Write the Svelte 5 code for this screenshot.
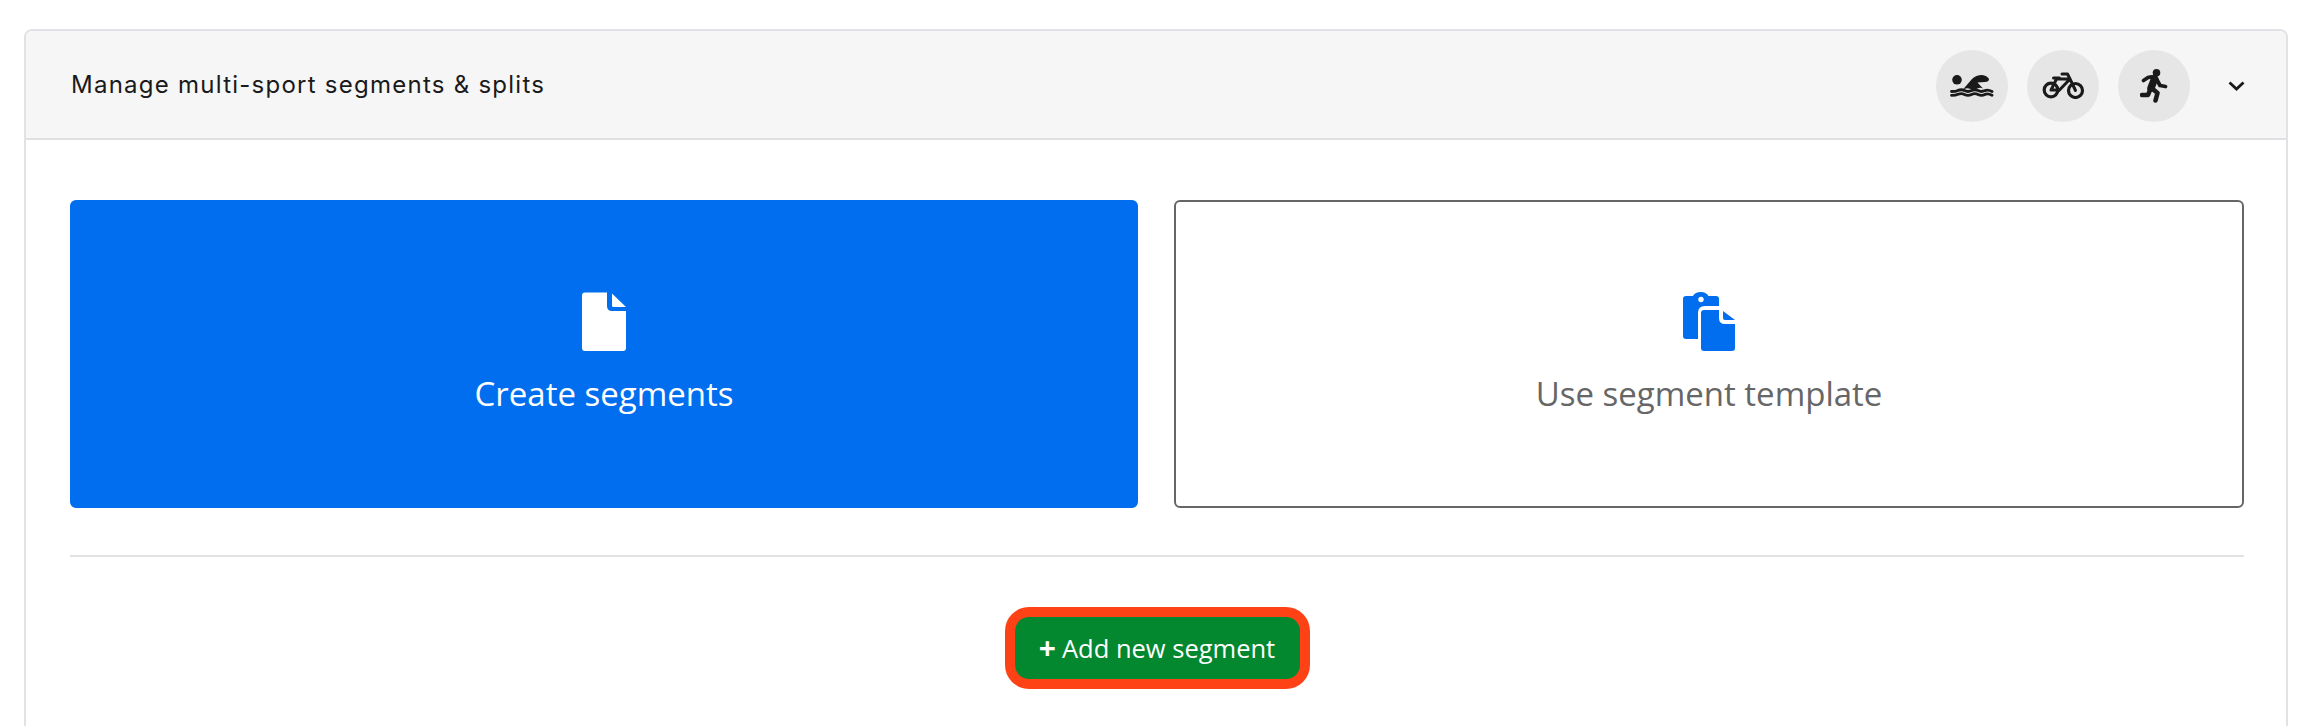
<script lang="ts">
  let sports = ['swim', 'bike', 'run'];
</script>

<div class="page">
  <section class="card">
    <header class="head">
      <h2>Manage multi-sport segments &amp; splits</h2>
      <div class="sports">
        {#each sports as s}
          <span class="sport">
            {#if s === 'swim'}
              <svg width="44" height="22" viewBox="0 0 44 22">
                <circle cx="7" cy="4.800" r="4.800" fill="#1a1a1a" />
                <path d="M12.500 15 L22 4 Q26 0 32 0 Q37 0.500 39 4 Q39 6.800 35 7 L27.500 7.600 L33 13.500 Q30 12 27 13.800 Q23.500 15.500 20 13.800 Q16 12 12.500 15Z" fill="#1a1a1a" />
                <path d="M1.500 16.500 Q6 16.500 8 15.400 Q11.500 14 14.500 15.600 Q18 17.400 21.500 15.600 Q25 14 28 15.600 Q31.500 17.400 35 15.600 Q38 14.400 42 16.500 M1.500 20.300 Q6 20.300 8 19.200 Q11.500 17.800 14.500 19.400 Q18 21.200 21.500 19.400 Q25 17.800 28 19.400 Q31.500 21.200 35 19.400 Q38 18.200 42 20.300" fill="none" stroke="#1a1a1a" stroke-width="2.800" stroke-linecap="round" />
              </svg>
            {:else if s === 'bike'}
              <svg width="43" height="27" viewBox="0 0 42 27">
                <circle cx="8.500" cy="18" r="6.800" fill="none" stroke="#1a1a1a" stroke-width="3.200" />
                <circle cx="33" cy="18.500" r="7" fill="none" stroke="#1a1a1a" stroke-width="3.200" />
                <path d="M8.500 18 L14 7 H27.500 L33 18.500 M16.500 18.500 L27.500 7 M8.500 18 H16.500 M11 6 H17 M19.500 2 H25 L27.500 7" fill="none" stroke="#1a1a1a" stroke-width="3" stroke-linecap="round" stroke-linejoin="round" />
              </svg>
            {:else}
              <svg width="28" height="34" viewBox="0 0 28 34">
                <circle cx="16.500" cy="3.800" r="3.800" fill="#1a1a1a" />
                <path d="M3.500 11.500 L8 8.500 Q13 7 16 9 L20 16.500 L25.500 17.500" fill="none" stroke="#1a1a1a" stroke-width="3.800" stroke-linecap="round" stroke-linejoin="round" />
                <path d="M14.500 10 L11 19" fill="none" stroke="#1a1a1a" stroke-width="7.500" stroke-linecap="round" />
                <path d="M11.500 19 L17.500 24 L15.500 31.500 M10 21 L8 26 H2" fill="none" stroke="#1a1a1a" stroke-width="4.600" stroke-linecap="round" stroke-linejoin="round" />
              </svg>
            {/if}
          </span>
        {/each}
        <button class="chev" aria-label="Collapse">
          <svg width="17" height="10" viewBox="0 0 17 10"><path d="M1.500 1.500 L8.500 8 L15.500 1.500" fill="none" stroke="#1a1a1a" stroke-width="2.800" /></svg>
        </button>
      </div>
    </header>

    <div class="body">
      <div class="tiles">
        <button class="tile primary">
          <svg width="44" height="60" viewBox="0 0 44 60">
            <path d="M3 0.500 H25 V14 Q25 19 30 19 H44 V56 Q44 59 41 59 H3 Q0 59 0 56 V3.500 Q0 0.500 3 0.500Z" fill="#fff" />
            <path d="M30 1.500 L44 15 H31.500 Q30 15 30 13.500Z" fill="#fff" />
          </svg>
          <span>Create segments</span>
        </button>
        <button class="tile">
          <svg width="52" height="60" viewBox="0 0 52 60">
            <path d="M3 4 H10 Q12 0 18 0 Q23 0 25.500 4 H33 Q36 4 36 7 V14 H22 Q15 14 15 21 V47 H3 Q0 47 0 44 V7 Q0 4 3 4Z" fill="#006eef" />
            <circle cx="18" cy="7.500" r="2.700" fill="#fff" />
            <path d="M21 18 H36 V26 Q36 32 42 32 H52 V56 Q52 59 49 59 H21 Q18 59 18 56 V21 Q18 18 21 18Z" fill="#006eef" />
            <path d="M40 19 L52 28 H42 Q40 28 40 26Z" fill="#006eef" />
          </svg>
          <span>Use segment template</span>
        </button>
      </div>

      <hr />

      <div class="actions">
        <button class="add"><b>+</b> Add new segment</button>
      </div>
    </div>
  </section>
</div>

<style>
  :global(body) {
    background: #fff;
    overflow: hidden;
  }
  .page {
    padding: 29px 18px 0 24px;
    height: 697px;
    overflow: hidden;
    font-family: 'Open Sans', sans-serif;
  }
  .card {
    border: 2px solid #e0e2e6;
    border-radius: 8px;
    height: 760px;
  }
  .head {
    display: flex;
    align-items: center;
    justify-content: space-between;
    height: 109px;
    box-sizing: border-box;
    padding: 2px 41px 0 45px;
    background: #f6f6f6;
    border-bottom: 2px solid #e0e0e2;
    border-radius: 6px 6px 0 0;
  }
  h2 {
    margin: 0 0 3px;
    font-family: Inter, sans-serif;
    font-weight: 400;
    font-size: 24px;
    letter-spacing: 1.250px;
    color: #1a1a1a;
  }
  .sports {
    display: flex;
    align-items: center;
    gap: 19px;
  }
  .sport {
    display: flex;
    align-items: center;
    justify-content: center;
    width: 72px;
    height: 72px;
    border-radius: 50%;
    background: #e6e6e6;
  }
  .chev {
    display: flex;
    padding: 0;
    margin-left: 19px;
    background: none;
    border: 0;
  }
  .body {
    padding: 60px 42px 0 44px;
  }
  .tiles {
    display: grid;
    grid-template-columns: 1068px 1fr;
    gap: 36px;
  }
  .tile {
    display: flex;
    flex-direction: column;
    align-items: center;
    height: 308px;
    padding: 90px 0 0;
    box-sizing: border-box;
    background: #fff;
    border: 2px solid #666;
    border-radius: 6px;
    color: #666;
    font-family: inherit;
    font-size: 33px;
  }
  .tile span {
    margin-top: 19px;
  }
  .primary {
    background: #006eef;
    border-color: #006eef;
    color: #fff;
  }
  hr {
    margin: 47px 0 0;
    border: 0;
    border-top: 2px solid #e2e2e2;
  }
  .actions {
    display: flex;
    justify-content: center;
    padding-top: 60px;
  }
  .add {
    display: flex;
    align-items: center;
    justify-content: center;
    gap: 6px;
    width: 285px;
    height: 62px;
    padding: 0;
    background: #03872f;
    border: 0;
    border-radius: 14px;
    box-shadow: 0 0 0 10px #ff4215;
    color: #fff;
    font-family: inherit;
    font-size: 25.500px;
    font-weight: 500;
  }
  .add b {
    font-size: 30px;
    font-weight: 700;
    line-height: 1;
  }
</style>
